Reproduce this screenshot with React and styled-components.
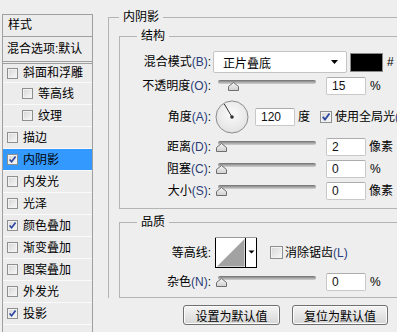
import React from 'react';
import styled, { createGlobalStyle } from 'styled-components';

const GlobalStyle = createGlobalStyle`
  html, body { margin: 0; padding: 0; }
  body {
    background: #eeeeee;
    font-family: "Liberation Sans", "Noto Sans CJK SC", sans-serif;
    font-size: 12px;
    color: #000;
  }
`

const Page = styled.div`
  display: flex;
  align-items: flex-start;
  height: 332px;
  overflow: hidden;
  padding-left: 2px;
`

// ---- left list of effects ----
const StylePanel = styled.div`
  width: 89px;
  flex-shrink: 0;
  margin-top: 14px;
  min-height: 330px;
  border: 1px solid #a0a0a0;
  border-bottom: none;
  background: #ececec;
`

const PanelHead = styled.div`
  height: 21px;
  line-height: 21px;
  padding-left: 5px;
  border-bottom: 1px solid #a0a0a0;
`

const BlendRow = styled.div`
  height: 24px;
  line-height: 24px;
  padding-left: 4px;
  border-bottom: 3px double #a0a0a0;
  white-space: nowrap;
`

const Item = styled.div`
  display: flex;
  align-items: center;
  height: ${props => props.$short ? 18 : 21}px;
  padding-left: ${props => props.$indent ? 19 : 4}px;
  border-bottom: 1px solid #fafafa;
  background: ${props => props.$active ? '#3399ff' : 'transparent'};
  white-space: nowrap;
`

const ItemText = styled.span`
  margin-left: 5px;
  line-height: 14px;
`

const Box = styled.span`
  display: inline-flex;
  align-items: center;
  justify-content: center;
  flex-shrink: 0;
  box-sizing: border-box;
  width: ${props => props.$size}px;
  height: ${props => props.$size}px;
  border: 1px solid #8e8f8f;
  background: linear-gradient(135deg, #d6d6d6, #f8f8f8);
  box-shadow: inset 0 0 0 1px #f2f2f2;
  margin-left: ${props => props.$ml || 0}px;
`

const CheckBox = ({ checked, size = 11, ml }) => (
  <Box $size={size} $ml={ml}>
    {checked && (
      <svg width={size - 2} height={size - 2} viewBox="0 0 9 9">
        <path d="M1.6 4.4 L3.6 6.8 L7.6 1.4" fill="none" stroke="#2a44a0" strokeWidth="1.6" />
      </svg>
    )}
  </Box>
)

// ---- right side ----
const Main = styled.div`
  flex: 1;
  min-width: 0;
  margin-left: 15px;
  margin-top: 10px;
  overflow: hidden;
`

const Group = styled.fieldset`
  margin: ${props => props.$mt || 0}px 0 0;
  padding: 0 0 ${props => props.$pb || 0}px ${props => props.$pl || 0}px;
  border: 1px solid #b4b4b4;
  min-width: 0;
  width: ${props => props.$w ? props.$w + 'px' : 'auto'};
  ${props => props.$open && 'border-right: none; border-bottom: none;'}
`

const Legend = styled.legend`
  padding: 0 4px;
  margin-left: ${props => props.$ml || 0}px;
  line-height: 14px;
`

const Row = styled.div`
  display: flex;
  align-items: center;
  height: ${props => props.$h || 22}px;
  margin-top: ${props => props.$mt || 0}px;
  white-space: nowrap;
`

const Label = styled.span`
  width: 91px;
  flex-shrink: 0;
  text-align: right;
  line-height: 14px;
`

const Key = styled.span`
  color: #2a3c78;
`

const Select = styled.div`
  display: flex;
  align-items: center;
  justify-content: space-between;
  box-sizing: border-box;
  width: 134px;
  height: 22px;
  margin-left: 2px;
  padding: 0 8px 0 9px;
  background: #fff;
  border: 1px solid #c4c4c4;
  border-radius: 2px;
`

const Swatch = styled.div`
  box-sizing: border-box;
  width: 33px;
  height: 19px;
  margin-left: 3px;
  background: #000;
  border: 1px solid #8a8a8a;
`

const Text = styled.span`
  margin-left: ${props => props.$ml || 0}px;
  line-height: 14px;
`

const Slider = styled.div`
  position: relative;
  flex-shrink: 0;
  width: 98px;
  height: 22px;
  margin-left: 7px;
`

const Track = styled.div`
  margin-top: 5px;
  height: 4px;
  border-radius: 2px;
  background: linear-gradient(#6c6c6c, #a6a6a6 50%, #d0d0d0);
`

const Thumb = styled.svg`
  position: absolute;
  top: 7px;
  left: ${props => props.$pos}px;
`

const NumBox = styled.div`
  box-sizing: border-box;
  flex-shrink: 0;
  width: 40px;
  height: 18px;
  margin-left: ${props => props.$ml ?? 10}px;
  padding-left: 5px;
  line-height: 16px;
  background: #fff;
  border: 1px solid #c8c8c8;
  border-top-color: #acacac;
  border-radius: 2px;
  color: #111;
`

const Dial = styled.svg`
  margin-left: 4px;
  flex-shrink: 0;
`

const Contour = styled.svg`
  margin-left: 4px;
  flex-shrink: 0;
`

const ButtonBar = styled.div`
  display: flex;
  gap: 12px;
  margin-top: 7px;
  padding-left: 75px;
`

const Button = styled.button`
  width: ${props => props.$w}px;
  height: 20px;
  padding: 0;
  font: inherit;
  color: #000;
  border: 1px solid #707070;
  border-radius: 3px;
  background: linear-gradient(#f4f4f4, #e6e6e6 50%, #d6d6d6);
  box-shadow: inset 0 0 0 1px #fbfbfb;
`

const SliderField = ({ value }) => (
  <Slider>
    <Track />
    <Thumb $pos={-2 + value * 0.8} width="11" height="9" viewBox="0 0 11 9">
      <defs>
        <linearGradient id="tg" x1="0" y1="0" x2="0" y2="1">
          <stop offset="0" stopColor="#f6f6f6" />
          <stop offset="1" stopColor="#cfcfcf" />
        </linearGradient>
      </defs>
      <polygon points="5.5,0.5 10.5,4.5 10.5,8.5 0.5,8.5 0.5,4.5" fill="url(#tg)" stroke="#6e6e6e" />
    </Thumb>
  </Slider>
)

const effects = [
  { name: '斜面和浮雕', short: true },
  { name: '等高线', indent: true },
  { name: '纹理', indent: true },
  { name: '描边' },
  { name: '内阴影', checked: true, active: true },
  { name: '内发光' },
  { name: '光泽' },
  { name: '颜色叠加', checked: true },
  { name: '渐变叠加' },
  { name: '图案叠加' },
  { name: '外发光' },
  { name: '投影', checked: true },
]

const App = () => {
  return (
    <Page>
      <GlobalStyle />
      <StylePanel>
        <PanelHead>样式</PanelHead>
        <BlendRow>混合选项:默认</BlendRow>
        {effects.map((fx) => (
          <Item key={fx.name} $short={fx.short} $indent={fx.indent} $active={fx.active}>
            <CheckBox checked={fx.checked} />
            <ItemText>{fx.name}</ItemText>
          </Item>
        ))}
      </StylePanel>

      <Main>
        <Group $open $pl={10}>
          <Legend>内阴影</Legend>

          <Group $mt={5} $w={300} $pb={6}>
            <Legend $ml={17}>结构</Legend>
            <Row $mt={8}>
              <Label>混合模式<Key>(B)</Key>:</Label>
              <Select>
                <span>正片叠底</span>
                <svg width="7" height="4" viewBox="0 0 7 4"><polygon points="0,0 7,0 3.5,4" fill="#000" /></svg>
              </Select>
              <Swatch />
              <Text $ml={4}>#</Text>
            </Row>
            <Row $mt={2}>
              <Label>不透明度<Key>(O)</Key>:</Label>
              <SliderField value={15} />
              <NumBox>15</NumBox>
              <Text $ml={4}>%</Text>
            </Row>
            <Row $mt={3} $h={34}>
              <Label>角度<Key>(A)</Key>:</Label>
              <Dial width="34" height="34" viewBox="0 0 34 34">
                <defs>
                  <radialGradient id="dg" cx="0.5" cy="0.4" r="0.6">
                    <stop offset="0" stopColor="#fbfbfb" />
                    <stop offset="1" stopColor="#e2e2e2" />
                  </radialGradient>
                </defs>
                <circle cx="17" cy="17" r="16" fill="url(#dg)" stroke="#8c8c8c" />
                <line x1="17" y1="17" x2="9.3" y2="4" stroke="#333" strokeWidth="1" />
                <circle cx="17" cy="17" r="1.8" fill="#333" />
              </Dial>
              <NumBox $ml={6}>120</NumBox>
              <Text $ml={3}>度</Text>
              <CheckBox checked size={12} ml={10} />
              <Text $ml={3}>使用全局光<Key>(G)</Key></Text>
            </Row>
            <Row $mt={2}>
              <Label>距离<Key>(D)</Key>:</Label>
              <SliderField value={0} />
              <NumBox>2</NumBox>
              <Text $ml={3}>像素</Text>
            </Row>
            <Row>
              <Label>阻塞<Key>(C)</Key>:</Label>
              <SliderField value={0} />
              <NumBox>0</NumBox>
              <Text $ml={4}>%</Text>
            </Row>
            <Row>
              <Label>大小<Key>(S)</Key>:</Label>
              <SliderField value={0} />
              <NumBox>0</NumBox>
              <Text $ml={3}>像素</Text>
            </Row>
          </Group>

          <Group $mt={6} $w={300} $pb={4}>
            <Legend $ml={17}>品质</Legend>
            <Row $mt={8} $h={31}>
              <Label>等高线:</Label>
              <Contour width="42" height="31" viewBox="0 0 42 31">
                <rect x="0.5" y="0.5" width="41" height="30" fill="#fff" stroke="#000" />
                <line x1="0" y1="0.5" x2="42" y2="0.5" stroke="#9a9a9a" />
                <polygon points="2,29.5 29.5,2 29.5,29.5" fill="#a2a2a2" />
                <line x1="30.5" y1="1" x2="30.5" y2="30" stroke="#000" />
                <polygon points="33.5,13.5 39.5,13.5 36.5,16.5" fill="#000" />
              </Contour>
              <CheckBox size={13} ml={13} />
              <Text $ml={2}>消除锯齿<Key>(L)</Key></Text>
            </Row>
            <Row $mt={3}>
              <Label>杂色<Key>(N)</Key>:</Label>
              <SliderField value={0} />
              <NumBox>0</NumBox>
              <Text $ml={4}>%</Text>
            </Row>
          </Group>
        </Group>

        <ButtonBar>
          <Button $w={97}>设置为默认值</Button>
          <Button $w={96}>复位为默认值</Button>
        </ButtonBar>
      </Main>
    </Page>
  )
}

export default App
